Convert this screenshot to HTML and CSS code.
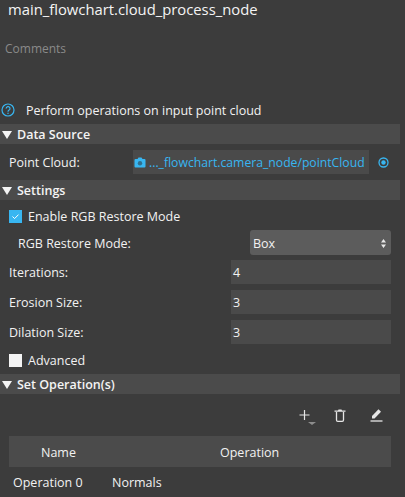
FILE: index.html
```html
<!DOCTYPE html>
<html>
<head>
    <title>cloud_process_node</title>
    <link rel="stylesheet" href="styles.css">
</head>
<body>
    <div id="panel">
        <div class="title">main_flowchart.cloud_process_node</div>
        <div class="comments">Comments</div>
        <div class="help">
            <svg class="help-icon" width="14" height="14" viewBox="0 0 14 14">
                <circle cx="7" cy="7" r="6" fill="none" stroke="#38b6f1" stroke-width="1.2"/>
                <path d="M5.2 5.6a1.9 1.9 0 1 1 2.9 1.5c-.7.4-1.1.8-1.1 1.6" fill="none" stroke="#38b6f1" stroke-width="1.2"/>
                <rect x="6.4" y="9.7" width="1.2" height="1.3" fill="#38b6f1"/>
            </svg>
            <span>Perform operations on input point cloud</span>
        </div>

        <div class="section"><i class="arrow"></i>Data Source</div>
        <div class="row source-row">
            <span class="label">Point Cloud:</span>
            <div class="source">
                <svg width="12" height="11" viewBox="0 0 12 11">
                    <path d="M1.5 2H3.5L4.5.6H7.5L8.5 2H10.5A1 1 0 0 1 11.5 3V9.5A1 1 0 0 1 10.5 10.5H1.5A1 1 0 0 1 .5 9.5V3A1 1 0 0 1 1.5 2Z" fill="#38b6f1"/>
                    <circle cx="6" cy="6.2" r="2.2" fill="#2f6f8f"/>
                </svg>
                <span>..._flowchart.camera_node/pointCloud</span>
            </div>
            <svg class="target" width="11" height="11" viewBox="0 0 11 11">
                <circle cx="5.5" cy="5.5" r="4.5" fill="none" stroke="#38b6f1" stroke-width="1.3"/>
                <circle cx="5.5" cy="5.5" r="2.2" fill="#38b6f1"/>
            </svg>
        </div>

        <div class="section"><i class="arrow"></i>Settings</div>
        <div class="check-row">
            <span class="box checked">
                <svg width="13" height="13" viewBox="0 0 13 13"><path d="M3.5 6.5L5.6 8.6L9.5 4.6" fill="none" stroke="#fff" stroke-width="1"/></svg>
            </span>
            Enable RGB Restore Mode
        </div>
        <div class="row select-row">
            <span class="label">RGB Restore Mode:</span>
            <div class="select">
                Box
                <svg width="5" height="9" viewBox="0 0 5 9"><path d="M2.5 0L5 3.4H0ZM2.5 9L0 5.6H5Z" fill="#e8e8e8"/></svg>
            </div>
        </div>
        <div class="row num-row"><span class="label">Iterations:</span><div class="num">4</div></div>
        <div class="row num-row"><span class="label">Erosion Size:</span><div class="num">3</div></div>
        <div class="row num-row"><span class="label">Dilation Size:</span><div class="num">3</div></div>
        <div class="check-row">
            <span class="box"></span>
            Advanced
        </div>

        <div class="section"><i class="arrow"></i>Set Operation(s)</div>
        <div class="toolbar">
            <svg class="tool-add" width="17" height="16" viewBox="0 0 17 16">
                <path d="M5.5 0V10M.5 5H10.5" stroke="#e6e6e6" stroke-width="1.2" fill="none"/>
                <path d="M9 12H17L13 15Z" fill="#8d8d8d"/>
            </svg>
            <svg class="tool-trash" width="12" height="13" viewBox="0 0 12 13">
                <path d="M4 1.6L4.5 .6H7.5L8 1.6H11.5V2.8H.5V1.6Z" fill="#e6e6e6"/>
                <path d="M2.5 3V11A1.3 1.3 0 0 0 3.8 12.3H8.2A1.3 1.3 0 0 0 9.5 11V3" fill="none" stroke="#e6e6e6" stroke-width="1.3"/>
            </svg>
            <svg class="tool-edit" width="13" height="14" viewBox="0 0 13 14">
                <path d="M.5 13H12.5" stroke="#e6e6e6" stroke-width="1.3" fill="none"/>
                <path d="M2 10.5V8L8.5 1.3L11 3.8L4.5 10.5Z" fill="#e6e6e6"/>
            </svg>
        </div>
        <div class="table">
            <div class="thead"><span class="col-name">Name</span><span class="col-op">Operation</span></div>
            <div class="tbody"><span class="cell-name">Operation 0</span><span class="cell-op">Normals</span></div>
        </div>
    </div>
</body>
</html>
```

FILE: styles.css
```css
html, body {
    margin: 0;
    height: 100%;
    overflow: hidden;
}

body {
    background-color: #3c3c3c;
    color: #f2f2f2;
    font-family: "Open Sans", "Noto Sans", sans-serif;
    font-size: 12.5px;
}

#panel {
    width: 405px;
    height: 497px;
}

.title {
    height: 19px;
    padding-left: 8px;
    font-size: 14.8px;
    line-height: 19px;
    color: #f4f4f4;
}

.comments {
    height: 20px;
    margin-top: 20px;
    padding-left: 5px;
    font-size: 12px;
    line-height: 20px;
    color: #8a8a8a;
}

.help {
    display: flex;
    align-items: center;
    height: 20px;
    margin-top: 41px;
    padding-left: 1px;
}

.help span {
    margin-left: 11px;
}

.section {
    display: flex;
    align-items: center;
    box-sizing: border-box;
    width: 400px;
    height: 20px;
    margin-top: 4px;
    padding-top: 1px;
    background-color: #4b4b4b;
    font-weight: 600;
    color: #f4f4f4;
}

.source-row + .section {
    margin-top: 6px;
}

.arrow {
    width: 0;
    height: 0;
    margin: 0 5px 0 2px;
    border-left: 5px solid transparent;
    border-right: 5px solid transparent;
    border-top: 8px solid #f4f4f4;
}

.row {
    display: flex;
    align-items: center;
    margin-top: 6px;
}

.label {
    box-sizing: border-box;
    padding-top: 1px;
    padding-left: 9px;
}

.source-row {
    height: 24px;
}

.source-row .label {
    width: 133px;
}

.source {
    display: flex;
    align-items: center;
    width: 236px;
    height: 24px;
    background-color: #4a4a4a;
    color: #38b6f1;
    font-size: 12.2px;
    white-space: nowrap;
}

.source svg {
    margin: 0 3px 0 1px;
    flex: none;
}

.target {
    margin-left: 9px;
}

.check-row {
    display: flex;
    align-items: center;
    height: 20px;
    margin-top: 6px;
    padding-left: 9px;
}

.box {
    width: 13px;
    height: 13px;
    margin-right: 6px;
    background-color: #f4f4f4;
}

.box.checked {
    background-color: #38b6f1;
}

.select-row {
    height: 25px;
    margin-top: 4px;
}

.select-row .label {
    width: 250px;
    padding-left: 18px;
}

.select {
    display: flex;
    align-items: center;
    justify-content: space-between;
    box-sizing: border-box;
    width: 141px;
    height: 25px;
    padding: 1px 5px 0 3px;
    background-color: #5c5c5c;
    border-radius: 3px;
}

.num-row {
    height: 24px;
}

.select-row + .num-row {
    margin-top: 5px;
}

.num-row .label {
    width: 231px;
}

.num {
    box-sizing: border-box;
    width: 160px;
    height: 24px;
    padding-top: 1px;
    padding-left: 2px;
    line-height: 24px;
    background-color: #4a4a4a;
}

.toolbar {
    display: flex;
    align-items: flex-start;
    box-sizing: border-box;
    height: 42px;
    padding-top: 14px;
    padding-left: 299px;
}

.tool-add {
    margin-top: 2px;
}

.tool-trash {
    margin-left: 18px;
    margin-top: 1px;
}

.tool-edit {
    margin-left: 24px;
}

.table {
    margin-left: 9px;
    width: 382px;
}

.thead {
    display: flex;
    align-items: center;
    box-sizing: border-box;
    height: 31px;
    padding-top: 1px;
    background-color: #4b4b4b;
}

.col-name {
    box-sizing: border-box;
    width: 211px;
    padding-left: 32px;
}

.tbody {
    display: flex;
    align-items: center;
    height: 30px;
}

.cell-name {
    box-sizing: border-box;
    width: 103px;
    padding-left: 4px;
}
```
